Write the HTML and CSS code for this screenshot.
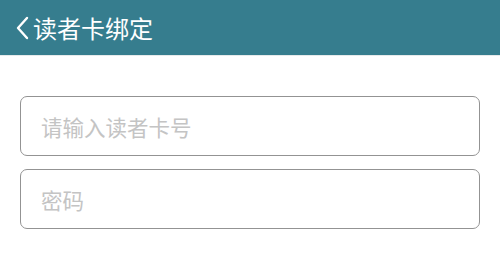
FILE: index.html
```html
<!DOCTYPE html>
<html lang="zh-CN">
<head>
<meta charset="utf-8">
<title>读者卡绑定</title>
<link rel="stylesheet" href="styles.css">
</head>
<body>
<header class="topbar">
  <svg class="back" width="14" height="24" viewBox="0 0 14 24" aria-hidden="true">
    <path d="M12 2 L3 12 L12 22" fill="none" stroke="#ffffff" stroke-width="2.4" stroke-linecap="round" stroke-linejoin="round"/>
  </svg>
  <h1 class="title">读者卡绑定</h1>
</header>
<main class="form">
  <div class="field"><input class="input" type="text" placeholder="请输入读者卡号"></div>
  <div class="field"><input class="input" type="password" placeholder="密码"></div>
</main>
</body>
</html>
```
FILE: styles.css
```css
html, body {
  margin: 0;
  padding: 0;
  background: #ffffff;
  font-family: "Noto Sans CJK SC", "Noto Sans", sans-serif;
}
.topbar {
  height: 56px;
  background: #367d8e;
  display: flex;
  align-items: center;
  padding-left: 15px;
  box-sizing: border-box;
  border-bottom: 1px solid #e6eaeb;
}
.back {
  display: block;
  margin-right: 4px;
  margin-top: 1px;
}
.title {
  margin: 0;
  color: #ffffff;
  font-size: 24px;
  font-weight: 400;
  line-height: 1;
}
.form {
  padding: 40px 20px 0 20px;
  display: flex;
  flex-direction: column;
  gap: 13px;
}
.field {
  display: flex;
}
.input {
  flex: 1;
  height: 60px;
  box-sizing: border-box;
  border: 1px solid #939393;
  border-radius: 7px;
  padding: 0 0 0 20px;
  font-family: "Noto Sans CJK SC", "Noto Sans", sans-serif;
  font-size: 21.5px;
  color: #333;
  background: #ffffff;
  outline: none;
}
.input::placeholder {
  color: #c4c4c4;
}
```
